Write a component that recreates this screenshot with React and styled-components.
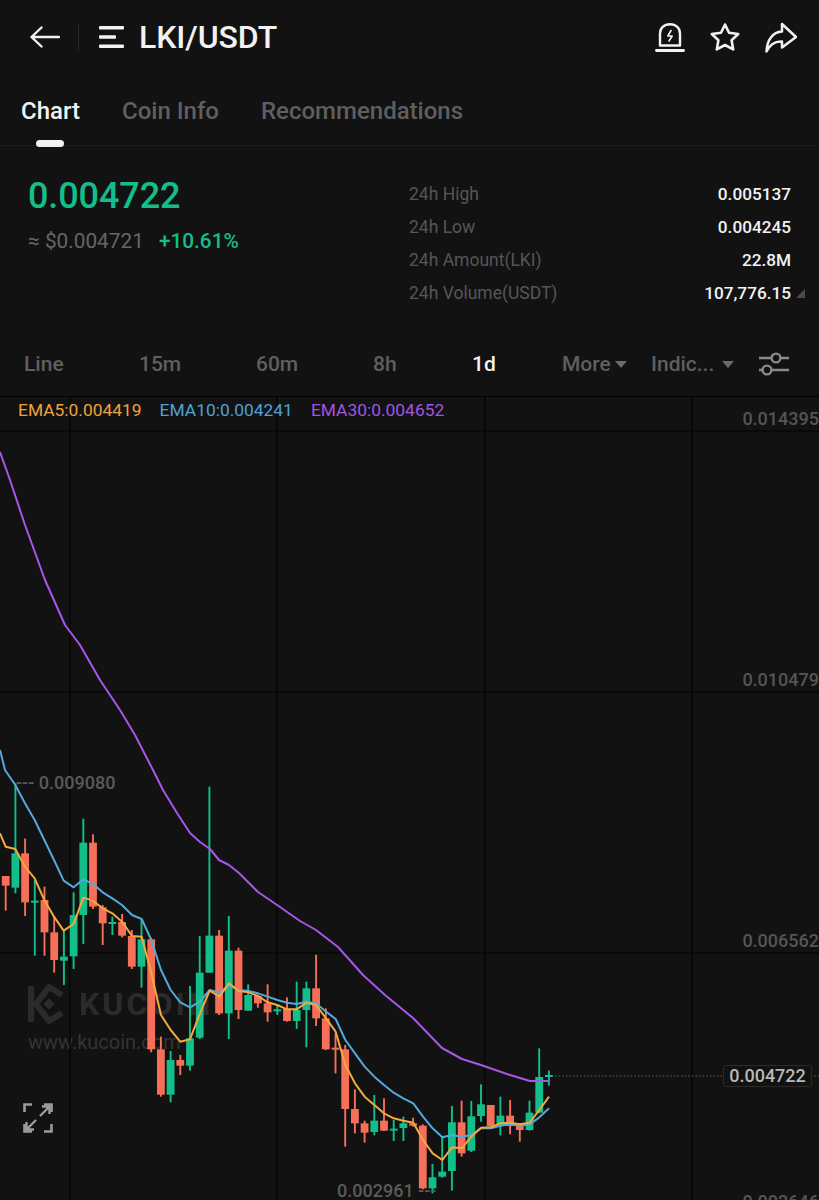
import React from 'react';
import styled, { createGlobalStyle } from 'styled-components';

const GREEN = '#12bf8b';
const RED = '#f66f59';

// g/r, wick top, wick bottom, body top, body bottom. Values are read at 3x, measured from `base`
const candlesA = [
  ['r', 318, 422, 318, 347], ['g', 40, 370, 250, 353], ['r', 206, 438, 250, 397], ['g', 330, 557, 392, 397],
  ['r', 350, 557, 390, 487], ['r', 440, 608, 487, 570], ['g', 480, 645, 560, 572], ['g', 367, 597, 435, 559],
  ['g', 146, 522, 218, 435], ['r', 193, 417, 218, 410], ['r', 405, 525, 412, 460], ['g', 440, 495, 456, 460],
  ['r', 432, 502, 456, 497], ['r', 480, 597, 498, 590], ['g', 450, 653, 508, 590], ['r', 505, 847, 508, 838],
  ['r', 800, 980, 838, 974], ['g', 843, 997, 870, 974], ['r', 855, 915, 870, 887], ['g', 648, 902, 805, 887],
  ['g', 498, 807, 608, 803], ['g', 50, 608, 497, 608], ['r', 480, 735, 497, 730], ['g', 438, 807, 542, 730],
  ['r', 533, 747, 542, 720], ['g', 643, 722, 675, 722], ['r', 675, 713, 678, 700], ['r', 643, 755, 700, 727],
].map((c) => [c[0], ...c.slice(1).map((v) => 770 + v / 3)]);

const candlesB = [
  ['g', 193, 225, 208, 213], ['r', 172, 245, 207, 243], ['g', 125, 267, 210, 243], ['g', 125, 322, 145, 210],
  ['r', 44, 258, 145, 235], ['r', 205, 330, 235, 328], ['r', 280, 400, 323, 328], ['r', 315, 620, 328, 507],
  ['r', 448, 580, 507, 550], ['r', 542, 608, 550, 578], ['g', 465, 586, 542, 576], ['r', 475, 573, 542, 572],
  ['g', 540, 603, 566, 571], ['g', 530, 603, 550, 564], ['r', 533, 560, 550, 557], ['r', 553, 748, 557, 745],
  ['g', 672, 760, 712, 745], ['g', 590, 713, 695, 710], ['g', 498, 752, 547, 693], ['r', 482, 650, 547, 640],
  ['g', 483, 636, 529, 632], ['g', 433, 545, 493, 528], ['r', 495, 558, 495, 558], ['g', 470, 586, 527, 555],
  ['r', 480, 583, 527, 558], ['r', 550, 605, 558, 570], ['g', 482, 572, 518, 570], ['g', 325, 520, 411, 518],
  ['g', 392, 437, 405, 409],
].map((c) => [c[0], ...c.slice(1).map((v) => 940 + v / 3)]);

const candles = [...candlesA, ...candlesB];

const toLine = (pts, bx, by) => pts.map(([x, y]) => [x / 3 + bx, y / 3 + by]);

const ema5 = [
  ...toLine([[0, 190], [17, 230], [46, 237], [75, 290], [104, 325], [133, 390], [162, 440], [191, 482], [221, 462], [250, 383], [279, 392], [308, 415], [337, 430], [366, 455], [396, 498], [425, 500], [454, 610], [483, 735], [512, 780], [541, 815], [570, 808], [600, 730], [629, 662], [658, 680], [687, 640], [716, 663], [745, 667], [774, 678], [803, 697]], 0, 770),
  ...toLine([[22, 195], [51, 208], [80, 208], [109, 188], [138, 195], [168, 235], [197, 275], [226, 375], [255, 430], [284, 470], [313, 495], [342, 520], [371, 535], [400, 542], [430, 548], [459, 600], [488, 640], [517, 660], [546, 622], [575, 625], [604, 590], [633, 563], [662, 562], [691, 550], [720, 548], [749, 553], [779, 548], [808, 510], [837, 470]], 270, 940),
];

const ema10 = [
  [0, 750],
  ...toLine([[15, 0], [46, 45], [75, 100], [104, 150], [133, 210], [162, 270], [191, 332], [221, 352], [250, 328], [279, 342], [308, 367], [337, 385], [366, 405], [396, 435], [425, 447], [454, 510], [483, 600], [512, 660], [541, 697], [570, 712], [600, 695], [629, 660], [658, 668], [687, 645], [716, 660], [745, 663], [774, 670], [803, 680]], 0, 770),
  ...toLine([[22, 180], [51, 188], [80, 192], [109, 185], [138, 190], [168, 215], [197, 237], [226, 300], [255, 340], [284, 380], [313, 410], [342, 435], [371, 458], [400, 475], [430, 490], [459, 530], [488, 565], [517, 592], [546, 585], [575, 590], [604, 585], [633, 565], [662, 565], [691, 557], [720, 553], [749, 557], [779, 553], [808, 532], [837, 505]], 270, 940),
];

const ema30 = [
  [0, 452], [10, 480], [25, 525], [45, 580], [65, 625], [80, 645], [100, 680], [120, 710], [135, 735], [153, 770],
  [163, 790], [177, 813], [190, 833], [200, 842], [210, 849], [219, 860], [229, 865], [239, 873], [258, 892], [280, 907], [300, 921],
  [316, 930], [338, 947], [363, 975], [385, 995], [413, 1018], [442, 1048], [462, 1059], [481, 1065], [510, 1075], [530, 1081], [549, 1081],
];

const pointsOf = (pts) => pts.map((p) => p.join(',')).join(' ');

const App = () => (
  <Page>
    <GlobalStyle />

    <TopBar>
      <IconSlot $w={30}>
        <svg width="30" height="22" viewBox="0 0 30 22" fill="none" stroke="#f2f2f2" strokeWidth="2.4" strokeLinecap="round" strokeLinejoin="round">
          <path d="M29 11H2M11.5 1.5L1.5 11l10 9.5" />
        </svg>
      </IconSlot>
      <VDivider />
      <IconSlot $w={25}>
        <svg width="25" height="22" viewBox="0 0 25 22" fill="#f2f2f2">
          <rect x="0" y="0" width="25" height="3.4" rx="1" />
          <rect x="0" y="9.3" width="17" height="3.4" rx="1" />
          <rect x="0" y="18.6" width="25" height="3.4" rx="1" />
        </svg>
      </IconSlot>
      <Title>LKI/USDT</Title>
      <TopActions>
        <svg width="30" height="30" viewBox="0 0 30 30" fill="none" stroke="#f2f2f2" strokeWidth="2.4" strokeLinecap="round" strokeLinejoin="round">
          <path d="M5 23.5V11.5C5 6 9 2.2 15 2.2S25 6 25 11.5V23.5Z" />
          <path d="M1.5 28.5H28.5" strokeWidth="2.8" />
          <path d="M16 8.5L12.8 14H17.2L14 19" strokeWidth="1.6" />
        </svg>
        <svg width="32" height="30" viewBox="0 0 32 30" fill="none" stroke="#f2f2f2" strokeWidth="2.6" strokeLinecap="round" strokeLinejoin="round">
          <path d="M16 2.5L20 10.8L29.2 12L22.6 18.3L24.2 27.4L16 23L7.8 27.4L9.4 18.3L2.8 12L12 10.8Z" />
        </svg>
        <svg width="32" height="31" viewBox="0 0 32 31" fill="none" stroke="#f2f2f2" strokeWidth="2.5" strokeLinecap="round" strokeLinejoin="round">
          <path d="M17 2L31 15L17 25.5V19.5C10 19 5 22.5 1.5 29.5C2 18 7.5 10 17 9.5Z" />
        </svg>
      </TopActions>
    </TopBar>

    <Tabs>
      <Tab $active>Chart<TabMark /></Tab>
      <Tab>Coin Info</Tab>
      <Tab>Recommendations</Tab>
    </Tabs>

    <Summary>
      <PriceColumn>
        <Price>0.004722</Price>
        <PriceMeta>
          <Fiat>≈ $0.004721</Fiat>
          <Change>+10.61%</Change>
        </PriceMeta>
      </PriceColumn>
      <Stats>
        <StatRow><StatLabel>24h High</StatLabel><StatValue>0.005137</StatValue></StatRow>
        <StatRow><StatLabel>24h Low</StatLabel><StatValue>0.004245</StatValue></StatRow>
        <StatRow><StatLabel>24h Amount(LKI)</StatLabel><StatValue>22.8M</StatValue></StatRow>
        <StatRow>
          <StatLabel>24h Volume(USDT)</StatLabel>
          <StatValue>107,776.15<CornerMark /></StatValue>
        </StatRow>
      </Stats>
    </Summary>

    <TimeBar>
      <TimeItem $w={40} $gap={75}>Line</TimeItem>
      <TimeItem $w={42} $gap={75}>15m</TimeItem>
      <TimeItem $w={42} $gap={75}>60m</TimeItem>
      <TimeItem $w={23} $gap={76}>8h</TimeItem>
      <TimeItem $w={23} $gap={67} $active>1d</TimeItem>
      <TimeItem $w={64} $gap={25}>More<Caret /></TimeItem>
      <TimeItem $w={80} $gap={28}>Indic...<Caret $left={8} /></TimeItem>
      <svg width="30" height="24" viewBox="0 0 30 24" fill="none" stroke="#8a8a8a" strokeWidth="2.4">
        <path d="M0 6H12M22 6H30M0 18H3M13 18H30" />
        <circle cx="17" cy="6" r="4.4" />
        <circle cx="8" cy="18" r="4.4" />
      </svg>
    </TimeBar>

    <Chart>
      <Watermark>
        <WatermarkBrand>
          <svg width="37" height="40" viewBox="0 0 37 40" fill="none" stroke="#2b2b2b" strokeWidth="6">
            <path d="M3 2V38" />
            <path d="M34 11L21 3L8 20L21 37L34 29" />
            <path d="M21 15L26 20L21 25L16 20Z" fill="#2b2b2b" strokeWidth="1" />
          </svg>
          <WatermarkName>KUCOIN</WatermarkName>
        </WatermarkBrand>
        <WatermarkUrl>www.kucoin.com</WatermarkUrl>
      </Watermark>

      <ChartSvg viewBox="0 396 819 804">
        {[396.5, 431, 692, 953].map((y) => (
          <line key={y} x1="0" x2="819" y1={y} y2={y} stroke="#030303" strokeWidth="1.2" />
        ))}
        {[70, 277, 485, 692].map((x) => (
          <line key={x} x1={x} x2={x} y1="396" y2="1200" stroke="#030303" strokeWidth="1.2" />
        ))}
        <line x1="555" x2="819" y1="1076" y2="1076" stroke="#5c5c5c" strokeWidth="1.2" strokeDasharray="1.6 2" />
        {candles.map(([dir, wickTop, wickBottom, bodyTop, bodyBottom], i) => {
          const x = 5.7 + i * 9.7;
          const color = dir === 'g' ? GREEN : RED;
          return (
            <g key={i} fill={color}>
              <rect x={x - 0.95} y={wickTop} width="1.9" height={wickBottom - wickTop} />
              <rect x={x - 3.9} y={bodyTop} width="7.8" height={Math.max(bodyBottom - bodyTop, 2)} />
            </g>
          );
        })}
        <polyline points={pointsOf(ema30)} fill="none" stroke="#a855e8" strokeWidth="2" strokeLinejoin="round" />
        <polyline points={pointsOf(ema10)} fill="none" stroke="#53a9dc" strokeWidth="2" strokeLinejoin="round" />
        <polyline points={pointsOf(ema5)} fill="none" stroke="#f5a83c" strokeWidth="2" strokeLinejoin="round" />
      </ChartSvg>

      <Legend>
        <LegendItem $color="#f0a23c">EMA5:0.004419</LegendItem>
        <LegendItem $color="#4fa3d8">EMA10:0.004241</LegendItem>
        <LegendItem $color="#a452e0">EMA30:0.004652</LegendItem>
      </Legend>

      <AxisLabel $y={23}>0.014395</AxisLabel>
      <AxisLabel $y={284}>0.010479</AxisLabel>
      <AxisLabel $y={545}>0.006562</AxisLabel>
      <AxisLabel $y={806}>0.002646</AxisLabel>

      <ExtremeLabel $x={16} $y={387}>--- 0.009080</ExtremeLabel>
      <ExtremeLabel $x={337} $y={795}>0.002961 ---</ExtremeLabel>

      <LastPrice>0.004722</LastPrice>

      <ExpandButton>
        <svg width="30" height="30" viewBox="0 0 30 30" fill="none" stroke="#9c9c9c" strokeWidth="2.6">
          <path d="M1.5 9V1.5H9M21 1.5H28.5V9M28.5 21V28.5H21M9 28.5H1.5V21" />
          <path d="M17 13L26.5 3.5M19 3.5H26.5V11M13 17L3.5 26.5M3.5 19V26.5H11" strokeWidth="2.4" />
        </svg>
      </ExpandButton>
    </Chart>
  </Page>
);

const GlobalStyle = createGlobalStyle`
  html, body {
    margin: 0;
    padding: 0;
    background: #121212;
  }
`;

const Page = styled.div`
  width: 819px;
  height: 1200px;
  overflow: hidden;
  display: flex;
  flex-direction: column;
  background: #121212;
  font-family: Roboto, 'Liberation Sans', sans-serif;
  color: #f2f2f2;
`;

const TopBar = styled.div`
  height: 74px;
  display: flex;
  align-items: center;
  padding: 0 22px 0 30px;
  box-sizing: border-box;
`;

const IconSlot = styled.div`
  width: ${(p) => p.$w}px;
  display: flex;
  align-items: center;
`;

const VDivider = styled.div`
  width: 1px;
  height: 27px;
  margin: 0 20px 0 18px;
  background: #262626;
`;

const Title = styled.div`
  margin-left: 15px;
  font-size: 32px;
  font-weight: 500;
  letter-spacing: -0.1px;
`;

const TopActions = styled.div`
  margin-left: auto;
  display: flex;
  align-items: center;
  gap: 24px;
`;

const Tabs = styled.div`
  height: 72px;
  display: flex;
  gap: 42px;
  padding: 0 0 0 21px;
  box-sizing: border-box;
  border-bottom: 1px solid #1c1c1c;
`;

const Tab = styled.div`
  position: relative;
  height: 72px;
  line-height: 75px;
  font-size: 24px;
  font-weight: 500;
  color: ${(p) => (p.$active ? '#f2f2f2' : '#5f5f5f')};
`;

const TabMark = styled.span`
  position: absolute;
  left: 15px;
  bottom: -1px;
  width: 28px;
  height: 7px;
  border-radius: 4px;
  background: #f2f2f2;
`;

const Summary = styled.div`
  height: 186px;
  display: flex;
  padding: 30px 28px 0 28px;
  box-sizing: border-box;
`;

const PriceColumn = styled.div`
  width: 381px;
`;

const Price = styled.div`
  font-size: 36px;
  font-weight: 500;
  line-height: 40px;
  letter-spacing: -0.1px;
  color: ${GREEN};
`;

const PriceMeta = styled.div`
  display: flex;
  gap: 15px;
  margin-top: 13px;
  font-size: 20.8px;
  line-height: 24px;
`;

const Fiat = styled.span`
  color: #666;
`;

const Change = styled.span`
  font-weight: 500;
  color: ${GREEN};
`;

const Stats = styled.div`
  flex: 1;
  display: flex;
  flex-direction: column;
  margin-top: 1px;
`;

const StatRow = styled.div`
  height: 33px;
  display: flex;
  justify-content: space-between;
  align-items: center;
  font-size: 17.5px;
`;

const StatLabel = styled.span`
  color: #565656;
`;

const StatValue = styled.span`
  position: relative;
  color: #f2f2f2;
  font-weight: 500;
  font-size: 17.2px;
`;

const CornerMark = styled.span`
  position: absolute;
  right: -14px;
  bottom: 5px;
  width: 0;
  height: 0;
  border-left: 9px solid transparent;
  border-bottom: 9px solid #4a4a4a;
`;

const TimeBar = styled.div`
  height: 64px;
  display: flex;
  align-items: center;
  padding-left: 24px;
  box-sizing: border-box;
`;

const TimeItem = styled.div`
  flex: none;
  width: ${(p) => p.$w}px;
  margin-right: ${(p) => p.$gap}px;
  display: flex;
  align-items: center;
  white-space: nowrap;
  font-size: 21px;
  font-weight: 500;
  color: ${(p) => (p.$active ? '#f2f2f2' : '#5f5f5f')};
`;

const Caret = styled.span`
  margin-left: ${(p) => p.$left || 4}px;
  width: 0;
  height: 0;
  border-left: 6px solid transparent;
  border-right: 6px solid transparent;
  border-top: 7px solid #6a6a6a;
`;

const Chart = styled.div`
  position: relative;
  flex: 1;
  overflow: hidden;
`;

const ChartSvg = styled.svg`
  position: absolute;
  inset: 0;
  width: 819px;
  height: 804px;
`;

const Watermark = styled.div`
  position: absolute;
  left: 28px;
  top: 588px;
`;

const WatermarkBrand = styled.div`
  display: flex;
  align-items: center;
  gap: 14px;
`;

const WatermarkName = styled.span`
  font-size: 32px;
  font-weight: 700;
  letter-spacing: 3px;
  color: #2b2b2b;
`;

const WatermarkUrl = styled.div`
  margin-top: 6px;
  font-size: 20px;
  color: #343434;
`;

const Legend = styled.div`
  position: absolute;
  left: 18px;
  top: 3px;
  display: flex;
  gap: 18px;
  font-size: 17.4px;
  line-height: 22px;
`;

const LegendItem = styled.span`
  color: ${(p) => p.$color};
`;

const AxisLabel = styled.span`
  position: absolute;
  right: 0;
  top: ${(p) => p.$y - 11}px;
  font-size: 18px;
  font-weight: 500;
  line-height: 22px;
  color: #555;
`;

const ExtremeLabel = styled.span`
  position: absolute;
  left: ${(p) => p.$x}px;
  top: ${(p) => p.$y - 11}px;
  font-size: 18px;
  font-weight: 500;
  line-height: 22px;
  white-space: nowrap;
  color: #5a5a5a;
`;

const LastPrice = styled.div`
  position: absolute;
  left: 723px;
  top: 669px;
  width: 89px;
  height: 22px;
  box-sizing: border-box;
  border: 1px solid #2a2a2a;
  border-radius: 3px;
  background: #121212;
  text-align: center;
  font-size: 18px;
  font-weight: 500;
  line-height: 20px;
  color: #b8b8b8;
`;

const ExpandButton = styled.div`
  position: absolute;
  left: 23px;
  top: 707px;
  width: 30px;
  height: 30px;
`;

export default App;
